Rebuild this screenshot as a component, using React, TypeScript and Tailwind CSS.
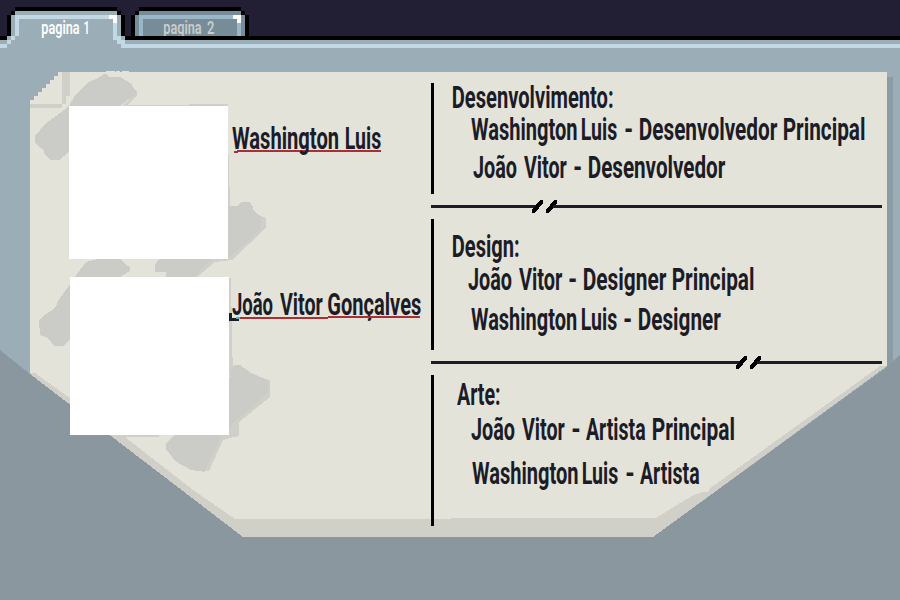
import { useLayoutEffect, useRef } from "react";

type Seg = [text: string, start: number, end: number];

// A word squeezed horizontally so that its glyphs span exactly `width` pixels.
function Word({ text, width, gap, size }: { text: string; width: number; gap: number; size: number }) {
  const ref = useRef<HTMLSpanElement>(null);
  useLayoutEffect(() => {
    const el = ref.current;
    const ctx = document.createElement("canvas").getContext("2d");
    if (!el || !ctx) return;
    const cs = getComputedStyle(el);
    ctx.font = `${cs.fontWeight} ${cs.fontSize} ${cs.fontFamily}`;
    const m = ctx.measureText(text);
    const s = width / (m.actualBoundingBoxRight + m.actualBoundingBoxLeft);
    el.style.transform = `translateX(${m.actualBoundingBoxLeft * s}px) scaleX(${s})`;
  }, [text, width]);
  return (
    <span className="block shrink-0" style={{ width, marginLeft: gap }}>
      <span ref={ref} className="block w-max origin-left whitespace-pre" style={{ fontSize: size }}>
        {text + " "}
      </span>
    </span>
  );
}

function Line({ segs, origin, className = "", size = 32 }: { segs: Seg[]; origin: number; className?: string; size?: number }) {
  return (
    <div className={`flex ${className}`}>
      {segs.map(([t, a, b], i) => (
        <Word key={i} text={t} width={b - a} gap={a - (i ? segs[i - 1][2] : origin)} size={size} />
      ))}
    </div>
  );
}

function Divider({ before, after }: { before: string; after: string }) {
  return (
    <div className="flex h-[13px] w-[451px] items-center">
      <div className={`h-[3px] bg-[#1c1c26] ${before}`} />
      <svg className="-mx-[5px] shrink-0" width="26" height="13" shapeRendering="crispEdges">
        <path d="M0 13V10L8 0H11V3L3 13ZM14 13V10L22 0H25V3L17 13Z" fill="#000" />
      </svg>
      <div className={`h-[3px] bg-[#1c1c26] ${after}`} />
    </div>
  );
}

function Backdrop() {
  return (
    <svg className="absolute inset-0" width="900" height="600" shapeRendering="crispEdges">
      <rect width="900" height="600" fill="#9badb7" />
      <rect width="900" height="36" fill="#221f35" />
      {/* tab strip outline */}
      <path d="M0 36H7V15H11V11H15V7H117V11H121V15H125V36H900V40H0Z" fill="#000" />
      <path d="M131 36V15H135V11H139V7H241V11H245V15H249V36Z" fill="#000" />
      {/* first tab */}
      <path d="M15 11H117V15H121V36H125V40H7V36H11V15H15Z" fill="#9badb7" />
      <path d="M0 44H7V40H11V36H15V15H117V36H121V40H125V44H900V48H121V44H117V40H113V19H19V36H15V40H11V44H7V48H0Z" fill="#c2d9e5" />
      <path d="M109 15H117V23H113V19H109Z" fill="#fff" />
      {/* second tab */}
      <path d="M135 36V15H139V11H241V15H245V36Z" fill="#768d99" />
      <path d="M139 36V15H241V36H237V19H143V36Z" fill="#9ab7c8" />
      <path d="M233 15H241V23H237V19H233Z" fill="#fff" />
      {/* desk and paper */}
      <rect x="887" y="77" width="6" height="300" fill="#8b9ca5" />
      <path d="M0 350L30 374L243 537H653L887 367L900 354V600H0Z" fill="#8a979f" />
      <path d="M58 72H887V366L653 537H243L30 374V100H34V96H38V92H42V88H46V84H50V80H54V76H58Z" fill="#d1d0c8" />
      <path d="M58 72H887V366H880L709 489V492H702L694 495L680 503L656 518H451V519H235L193 490L125 437L70 398L35 373H30V100H34V96H38V92H42V88H46V84H50V80H54V76H58Z" fill="#e3e3da" />
      <path d="M106 71H115V72H116V71H120V72H122V71H129V73H106Z" fill="#e3e3da" />
      <path d="M62 72H70V96H66V104H62ZM30 104H62V108H30Z" fill="#d1d0c8" />
      {/* tape shadows */}
      <path d="M189 104H228V106H125V105H189ZM228 155H229V187H230V206H228ZM229 278H231V307H232V357H233V375H229ZM112 435H159V437H122ZM258 215L266 218V228L232 260L215 262L197 277H190ZM264 380H270V397L239 422V427V436L229 438L223 440L209 471H204L229 420Z" fill="#d1d0c8" />
      <path d="M137 92L122 106H126L137 95Z" fill="#d1d0c8" />
      {/* torn tape */}
      <path d="M104 74H106L109 77H120L132 84L133 88L137 91V93L120 106L69 152L59 160H51L44 154V151L41 148L35 143V136L46 123L56 116L68 107L76 94L87 83L98 78Z" fill="#cbccc8" />
      <path d="M228 206H238L241 202H250L253 207V210L257 214L261 216V228L252 238L228 258L213 259L194 277H166V272H155V265L160 258H228Z" fill="#cbccc8" />
      <path d="M75 277L80 270L86 262L98 259H121L125 264L130 267V271L120 277ZM70 284L58 301L56 306L51 311L44 315L39 321L40 335L48 338L54 346H63L70 340Z" fill="#cbccc8" />
      <path d="M229 378L234 365H240L251 373L268 380V392L250 409L238 418L229 427ZM174 435H222L217 446L205 470V472L191 470L175 461L166 449V443Z" fill="#cbccc8" />
    </svg>
  );
}

export default function App() {
  return (
    <div className="relative h-[600px] w-[900px] overflow-hidden font-['Roboto','Liberation_Sans',sans-serif] font-bold leading-[32px] text-[#1c1c26]">
      <Backdrop />
      <div className="relative flex h-full flex-col">
        <nav className="h-[72px] shrink-0">
          <div className="flex h-9 pt-[15px] leading-[25px] text-white">
            <div className="h-6 w-[135px] font-semibold">
              <Line origin={0} size={19} segs={[["pagina", 42, 79.5], ["1", 83.5, 87.5]]} />
            </div>
            <div className="h-[21px] w-[114px] overflow-hidden font-semibold text-[#cbcbcb]">
              <Line origin={135} size={19} segs={[["pagina", 164, 201.5], ["2", 207, 214.5]]} />
            </div>
          </div>
        </nav>
        <main className="flex">
          <section className="w-[431px] shrink-0 pt-[34px]">
            <div className="flex h-[153px]">
              <div className="ml-[69px] h-[153px] w-[159px] bg-white" />
              <div className="relative pt-4">
                <div className="absolute left-[9px] top-[44px] h-[2px] w-[144px] bg-[#a92f32]" />
                <div className="absolute left-[6px] top-[45px] h-[2px] w-1 bg-[#a92f32]" />
                <Line origin={228} segs={[["Washington", 232, 338.5], ["Luis", 346, 381]]} />
              </div>
            </div>
            <div className="mt-[18px] flex h-[158px]">
              <div className="ml-[70px] h-[158px] w-[159px] bg-white" />
              <div className="relative pt-[11px]">
                <Line origin={229} segs={[["João", 232, 273], ["Vitor", 280, 323], ["Gonçalves", 328, 421]]} />
                <div className="absolute left-[11px] top-[40px] h-[2px] w-[88px] bg-[#a92f32]" />
                <div className="absolute left-[99px] top-[39px] h-[2px] w-[92px] bg-[#a92f32]" />
                <svg className="absolute left-0 top-[36px]" width="11" height="8" shapeRendering="crispEdges">
                  <path d="M0 0H3V5H10V8H0Z" fill="#1c1c26" />
                  <path d="M7 4H11V6H7Z" fill="#4fb5bb" />
                </svg>
              </div>
            </div>
          </section>
          <section className="w-[451px] shrink-0 pt-[11px]">
            <div className="flex h-[111px] flex-col border-l-[3px] border-black">
              <Line className="-mt-[2px]" origin={434} segs={[["Desenvolvimento:", 452.5, 612.5]]} />
              <Line origin={434} segs={[["Washington", 471, 577], ["Luis", 582, 617], ["-", 625, 632], ["Desenvolvedor", 639.5, 777], ["Principal", 784, 864.5]]} />
              <Line className="mt-[6px]" origin={434} segs={[["João", 473, 517], ["Vitor", 524, 567], ["-", 574, 581], ["Desenvolvedor", 589, 725.5]]} />
            </div>
            <div className="mt-[6px]"><Divider before="w-[106px]" after="w-[329px]" /></div>
            <div className="mt-[6px] h-[131px] border-l-[3px] border-black pt-[11px]">
              <Line origin={434} segs={[["Design:", 452.5, 518.5]]} />
              <Line className="mt-px" origin={434} segs={[["João", 468, 512], ["Vitor", 518.5, 562], ["-", 569, 576], ["Designer", 583.5, 666], ["Principal", 673, 753.5]]} />
              <Line className="mt-[8px]" origin={434} segs={[["Washington", 470.5, 576], ["Luis", 582, 617], ["-", 624, 631], ["Designer", 639, 721]]} />
            </div>
            <div className="mt-[6px]"><Divider before="w-[310px]" after="w-[125px]" /></div>
            <div className="mt-[6px] h-[151px] border-l-[3px] border-black pt-[3px]">
              <Line origin={434} segs={[["Arte:", 457, 500]]} />
              <Line className="mt-[3px]" origin={434} segs={[["João", 471, 515], ["Vitor", 522, 565], ["-", 571.5, 579], ["Artista", 586, 645.5], ["Principal", 652.5, 733.5]]} />
              <Line className="mt-[12px]" origin={434} segs={[["Washington", 472, 578], ["Luis", 583, 618], ["-", 625.5, 633], ["Artista", 640, 699.5]]} />
            </div>
          </section>
        </main>
      </div>
    </div>
  );
}
